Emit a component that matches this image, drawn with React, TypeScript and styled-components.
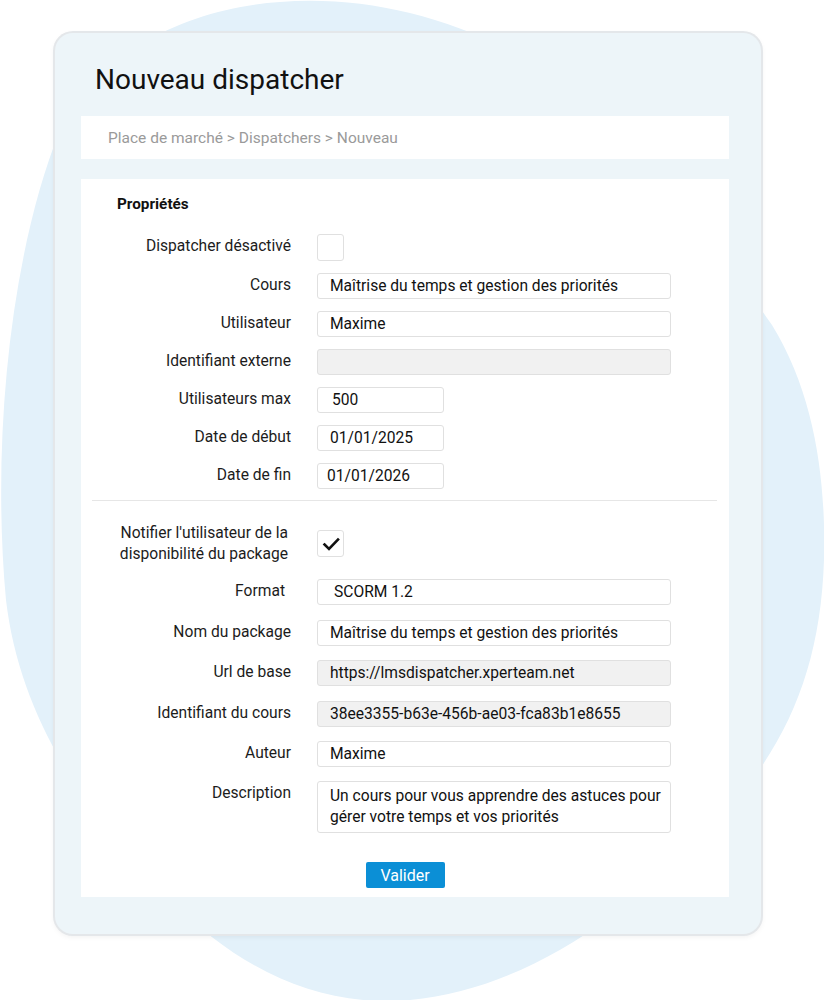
import styled, { createGlobalStyle } from "styled-components";

const GlobalStyle = createGlobalStyle`
  html, body {
    margin: 0;
    padding: 0;
    background: #ffffff;
  }
  body {
    font-family: Roboto, "Liberation Sans", Arial, sans-serif;
    color: #1a1a1a;
  }
`;

type Row = {
  label: string;
  value?: string;
  kind?: "field" | "check";
  width?: number;
  disabled?: boolean;
  checked?: boolean;
  pad?: number;
  shift?: number;
};

const firstRows: Row[] = [
  { label: "Dispatcher désactivé", kind: "check", checked: false },
  { label: "Cours", value: "Maîtrise du temps et gestion des priorités" },
  { label: "Utilisateur", value: "Maxime" },
  { label: "Identifiant externe", value: "", disabled: true },
  { label: "Utilisateurs max", value: "500", width: 127, pad: 14 },
  { label: "Date de début", value: "01/01/2025", width: 127, pad: 12 },
  { label: "Date de fin", value: "01/01/2026", width: 127, pad: 9 },
];

const secondRows: Row[] = [
  { label: "Format", value: "SCORM 1.2", pad: 16, shift: 6 },
  { label: "Nom du package", value: "Maîtrise du temps et gestion des priorités" },
  { label: "Url de base", value: "https://lmsdispatcher.xperteam.net", disabled: true },
  { label: "Identifiant du cours", value: "38ee3355-b63e-456b-ae03-fca83b1e8655", disabled: true },
  { label: "Auteur", value: "Maxime" },
];

const App = (): JSX.Element => {
  const renderRow = (row: Row) => (
    <FormRow key={row.label}>
      <Label $shift={row.shift}>{row.label}</Label>
      {row.kind === "check" ? (
        <CheckBox>{row.checked && <CheckMark />}</CheckBox>
      ) : (
        <Field $width={row.width} $disabled={row.disabled} $pad={row.pad}>
          {row.value}
        </Field>
      )}
    </FormRow>
  );

  return (
    <Page>
      <GlobalStyle />
      <Blob viewBox="0 0 824 1000" preserveAspectRatio="none">
        <path
          d="M 280,2 C 360,-4 440,14 520,55 C 630,115 705,230 772,325 C 815,395 826,480 824,560 C 820,680 780,760 700,840 C 620,920 520,990 410,1000 C 320,1008 240,970 170,900 C 90,820 20,720 6,600 C -8,450 8,260 60,130 C 100,50 190,8 280,2 Z"
          fill="#e3f1fa"
        />
      </Blob>
      <Card>
        <Title>Nouveau dispatcher</Title>
        <Breadcrumb>Place de marché &gt; Dispatchers &gt; Nouveau</Breadcrumb>
        <Panel>
          <SectionTitle>Propriétés</SectionTitle>
          <FormGrid $gap={12}>{firstRows.map(renderRow)}</FormGrid>
          <Divider />
          <FormGrid $gap={14.4}>
            <FormRow $center>
              <Label $multi>
                Notifier l'utilisateur de la
                <br />
                disponibilité du package
              </Label>
              <CheckBox>
                <CheckMark />
              </CheckBox>
            </FormRow>
            {secondRows.map(renderRow)}
            <FormRow>
              <Label>Description</Label>
              <TextArea>
                Un cours pour vous apprendre des astuces pour gérer votre temps et vos
                priorités
              </TextArea>
            </FormRow>
          </FormGrid>
          <Actions>
            <SubmitButton type="button">Valider</SubmitButton>
          </Actions>
        </Panel>
      </Card>
    </Page>
  );
};

const CheckMark = () => (
  <svg width="20" height="16" viewBox="0 0 20 16">
    <path
      d="M 3.5 8.5 L 8 13 L 17 3.5"
      fill="none"
      stroke="#111"
      strokeWidth="2.6"
      strokeLinecap="square"
    />
  </svg>
);

const Page = styled.div`
  position: relative;
  width: 824px;
  height: 1000px;
  overflow: hidden;
  padding: 33px 0 0 55px;
  box-sizing: border-box;
`;

const Blob = styled.svg`
  position: absolute;
  left: 0;
  top: 0;
  width: 824px;
  height: 1000px;
`;

const Card = styled.div`
  position: relative;
  width: 706px;
  height: 901px;
  box-sizing: border-box;
  background: #edf5f9;
  border-radius: 18px;
  box-shadow: 0 0 0 2px #e4e7ea, 0 2px 6px rgba(0, 0, 0, 0.08);
  padding: 31px 32px 0 26px;
`;

const Title = styled.h1`
  margin: 0 0 20px 14px;
  font-size: 28px;
  line-height: 32px;
  font-weight: 400;
  color: #111;
`;

const Breadcrumb = styled.div`
  height: 43px;
  background: #ffffff;
  display: flex;
  align-items: center;
  padding-left: 27px;
  font-size: 15.5px;
  color: #9a9a9a;
  margin-bottom: 20px;
`;

const Panel = styled.div`
  background: #ffffff;
  height: 718px;
  box-sizing: border-box;
  padding: 15px 0 0 0;
`;

const SectionTitle = styled.div`
  font-size: 15.3px;
  line-height: 20px;
  font-weight: 700;
  color: #111;
  padding-left: 36px;
  margin-bottom: 20px;
`;

const FormGrid = styled.div<{ $gap: number }>`
  display: flex;
  flex-direction: column;
  gap: ${(p) => p.$gap}px;
`;

const FormRow = styled.div<{ $center?: boolean }>`
  display: grid;
  grid-template-columns: 210px 1fr;
  column-gap: 26px;
  align-items: ${(p) => (p.$center ? "center" : "start")};
`;

const Label = styled.div<{ $multi?: boolean; $shift?: number }>`
  text-align: right;
  font-size: 15.6px;
  line-height: ${(p) => (p.$multi ? "21px" : "25px")};
  color: #1c1c1c;
  padding-right: ${(p) => p.$shift ?? 0}px;
  ${(p) => p.$multi && "margin-top: 1px; padding-right: 3px;"}
`;

const Field = styled.div<{ $width?: number; $disabled?: boolean; $pad?: number }>`
  width: ${(p) => p.$width ?? 354}px;
  height: 26px;
  box-sizing: border-box;
  border: 1px solid #e0e0e0;
  border-radius: 3px;
  background: ${(p) => (p.$disabled ? "#f1f1f1" : "#ffffff")};
  padding-left: ${(p) => p.$pad ?? 12}px;
  font-size: 15.6px;
  line-height: 24px;
  color: #111;
  white-space: nowrap;
  overflow: hidden;
`;

const TextArea = styled.div`
  width: 354px;
  height: 52px;
  box-sizing: border-box;
  border: 1px solid #e0e0e0;
  border-radius: 3px;
  padding: 4px 6px 0 12px;
  font-size: 15.6px;
  line-height: 21px;
  color: #111;
`;

const CheckBox = styled.div`
  width: 27px;
  height: 27px;
  box-sizing: border-box;
  border: 1px solid #e0e0e0;
  border-radius: 3px;
  background: #ffffff;
  display: flex;
  align-items: center;
  justify-content: center;
`;

const Divider = styled.hr`
  border: none;
  border-top: 1px solid #e6e6e6;
  margin: 11px 12px 21px 11px;
`;

const Actions = styled.div`
  display: flex;
  justify-content: center;
  margin-top: 29px;
`;

const SubmitButton = styled.button`
  width: 79px;
  height: 26px;
  border: none;
  border-radius: 2px;
  background: #0b8fd6;
  color: #ffffff;
  font-family: Roboto, "Liberation Sans", Arial, sans-serif;
  font-size: 16px;
  padding: 0;
  cursor: pointer;
`;

export default App;
